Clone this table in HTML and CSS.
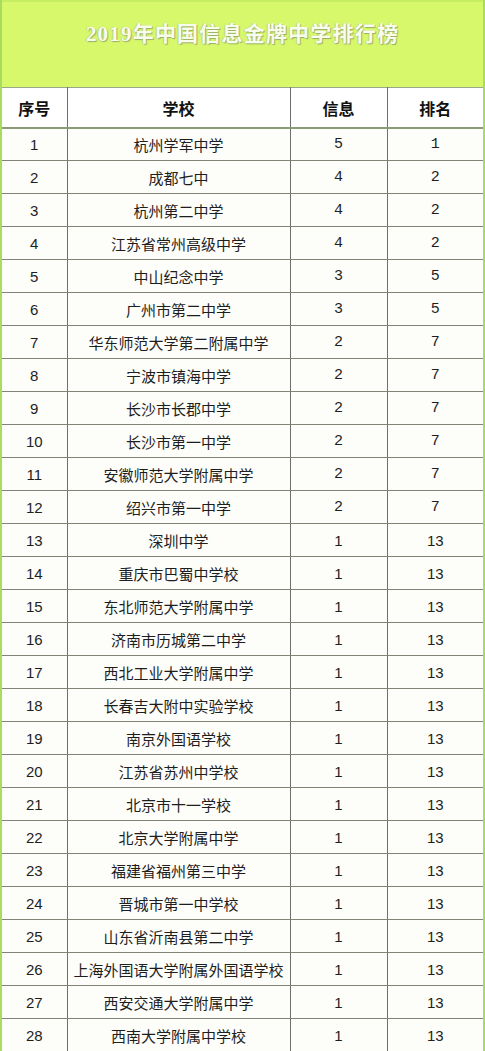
FILE: index.html
```html
<!DOCTYPE html>
<html lang="zh">
<head>
<meta charset="utf-8">
<title>2019年中国信息金牌中学排行榜</title>
<link rel="stylesheet" href="styles.css">
</head>
<body>
<div class="frame">
  <div class="title"><h1>2019年中国信息金牌中学排行榜</h1></div>
  <table class="rank">
    <colgroup>
      <col class="c1"><col class="c2"><col class="c3"><col class="c4">
    </colgroup>
    <thead>
      <tr><th>序号</th><th>学校</th><th>信息</th><th>排名</th></tr>
    </thead>
    <tbody>
      <tr><td class="num">1</td><td>杭州学军中学</td><td class="mono">5</td><td class="mono">1</td></tr>
      <tr><td class="num">2</td><td>成都七中</td><td class="mono">4</td><td class="mono">2</td></tr>
      <tr><td class="num">3</td><td>杭州第二中学</td><td class="mono">4</td><td class="mono">2</td></tr>
      <tr><td class="num">4</td><td>江苏省常州高级中学</td><td class="mono">4</td><td class="mono">2</td></tr>
      <tr><td class="num">5</td><td>中山纪念中学</td><td class="mono">3</td><td class="mono">5</td></tr>
      <tr><td class="num">6</td><td>广州市第二中学</td><td class="mono">3</td><td class="mono">5</td></tr>
      <tr><td class="num">7</td><td>华东师范大学第二附属中学</td><td class="mono">2</td><td class="mono">7</td></tr>
      <tr><td class="num">8</td><td>宁波市镇海中学</td><td class="mono">2</td><td class="mono">7</td></tr>
      <tr><td class="num">9</td><td>长沙市长郡中学</td><td class="mono">2</td><td class="mono">7</td></tr>
      <tr><td class="num">10</td><td>长沙市第一中学</td><td class="mono">2</td><td class="mono">7</td></tr>
      <tr><td class="num">11</td><td>安徽师范大学附属中学</td><td class="mono">2</td><td class="mono">7</td></tr>
      <tr><td class="num">12</td><td>绍兴市第一中学</td><td class="mono">2</td><td class="mono">7</td></tr>
      <tr><td class="num">13</td><td>深圳中学</td><td class="num">1</td><td class="num">13</td></tr>
      <tr><td class="num">14</td><td>重庆市巴蜀中学校</td><td class="num">1</td><td class="num">13</td></tr>
      <tr><td class="num">15</td><td>东北师范大学附属中学</td><td class="num">1</td><td class="num">13</td></tr>
      <tr><td class="num">16</td><td>济南市历城第二中学</td><td class="num">1</td><td class="num">13</td></tr>
      <tr><td class="num">17</td><td>西北工业大学附属中学</td><td class="num">1</td><td class="num">13</td></tr>
      <tr><td class="num">18</td><td>长春吉大附中实验学校</td><td class="num">1</td><td class="num">13</td></tr>
      <tr><td class="num">19</td><td>南京外国语学校</td><td class="num">1</td><td class="num">13</td></tr>
      <tr><td class="num">20</td><td>江苏省苏州中学校</td><td class="num">1</td><td class="num">13</td></tr>
      <tr><td class="num">21</td><td>北京市十一学校</td><td class="num">1</td><td class="num">13</td></tr>
      <tr><td class="num">22</td><td>北京大学附属中学</td><td class="num">1</td><td class="num">13</td></tr>
      <tr><td class="num">23</td><td>福建省福州第三中学</td><td class="num">1</td><td class="num">13</td></tr>
      <tr><td class="num">24</td><td>晋城市第一中学校</td><td class="num">1</td><td class="num">13</td></tr>
      <tr><td class="num">25</td><td>山东省沂南县第二中学</td><td class="num">1</td><td class="num">13</td></tr>
      <tr><td class="num">26</td><td>上海外国语大学附属外国语学校</td><td class="num">1</td><td class="num">13</td></tr>
      <tr><td class="num">27</td><td>西安交通大学附属中学</td><td class="num">1</td><td class="num">13</td></tr>
      <tr><td class="num">28</td><td>西南大学附属中学校</td><td class="num">1</td><td class="num">13</td></tr>
    </tbody>
  </table>
</div>
</body>
</html>
```
FILE: styles.css
```css
html, body {
  margin: 0;
  padding: 0;
  background: #ffffff;
}

body {
  width: 485px;
  font-family: "Noto Sans CJK SC", "Liberation Sans", sans-serif;
  color: #1e1e1e;
}

.frame {
  width: 485px;
  border-left: 2px solid #a9dc5e;
  border-right: 2px solid #a9dc5e;
  box-sizing: border-box;
  background: #fdfdfa;
}

.title {
  height: 87px;
  background: #d8f86c;
  border-top: 2px solid #c6ee62;
  box-sizing: border-box;
  display: flex;
  justify-content: center;
  padding-top: 19px;
}

.title h1 {
  margin: 0;
  font-family: "Liberation Serif", "Noto Sans CJK SC", serif;
  font-size: 21px;
  line-height: 26px;
  font-weight: 700;
  color: #f8fcec;
  letter-spacing: 1.2px;
  text-shadow: 1px 1px 1px #98ad66, -1px 0 1px #b9d27a;
}

.rank {
  width: 481px;
  border-collapse: collapse;
  table-layout: fixed;
}

.c1 { width: 65px; }
.c2 { width: 223px; }
.c3 { width: 97px; }
.c4 { width: 96px; }

.rank th,
.rank td {
  padding: 0;
  text-align: center;
  vertical-align: middle;
  border-left: 1px solid #6e6e6a;
  border-right: 1px solid #6e6e6a;
  white-space: nowrap;
  overflow: hidden;
}

.rank th:first-child,
.rank td:first-child { border-left: none; }
.rank th:last-child,
.rank td:last-child { border-right: none; }

.rank thead tr {
  height: 40px;
}

.rank th {
  font-size: 16px;
  font-weight: 700;
  color: #111;
  border-top: 1px solid #9aa58a;
  border-bottom: 2px solid #8c9a78;
  background: #ffffff;
  padding-top: 2px;
}

.rank tbody tr {
  height: 33px;
}

.rank td {
  font-size: 15px;
  border-bottom: 1px solid #7f8476;
}

.rank tbody tr:last-child td {
  border-bottom: none;
}

.rank td.num {
  font-family: "Liberation Sans", "Noto Sans CJK SC", sans-serif;
  font-size: 15px;
}

.rank td.mono {
  font-family: "Liberation Mono", "DejaVu Sans Mono", monospace;
  font-size: 15px;
}
```
